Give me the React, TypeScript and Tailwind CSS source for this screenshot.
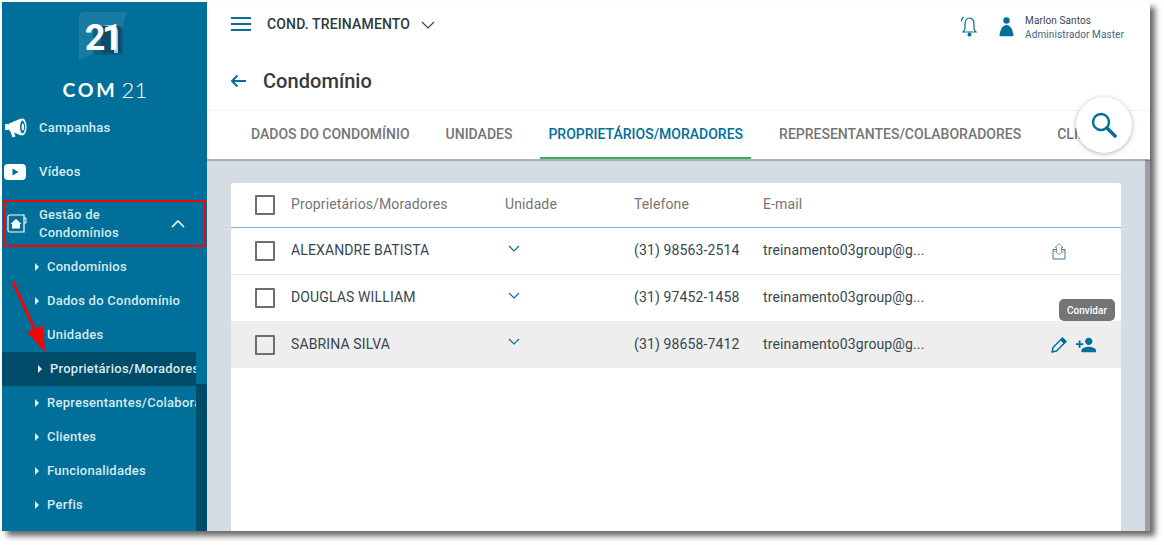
import { MdPersonAdd } from "react-icons/md";

const SUB_MENU = [
  "Condomínios",
  "Dados do Condomínio",
  "Unidades",
  "Proprietários/Moradores",
  "Representantes/Colaboradores",
  "Clientes",
  "Funcionalidades",
  "Perfis",
];

const TABS = [
  "DADOS DO CONDOMÍNIO",
  "UNIDADES",
  "PROPRIETÁRIOS/MORADORES",
  "REPRESENTANTES/COLABORADORES",
  "CLIENTES",
];

const ROWS = [
  { name: "ALEXANDRE BATISTA", phone: "(31) 98563-2514", height: "h-[47px]", textGap: "mb-[2px]" },
  { name: "DOUGLAS WILLIAM", phone: "(31) 97452-1458", height: "h-[46px]", textGap: "mb-[2px]" },
  { name: "SABRINA SILVA", phone: "(31) 98658-7412", height: "h-[47px]", textGap: "mb-0" },
];

const Logo = () => (
  <div className="flex flex-col items-center h-[104px] pt-[10px] shrink-0">
    <div className="relative w-[48px] h-[50px] mr-[4px] flex items-center justify-center">
      <svg width="48" height="50" viewBox="0 0 48 50" className="absolute inset-0">
        <polygon points="0,3 3,0 48,0 38,32 0,48" fill="#2a84a8" opacity="0.6" />
        <rect x="14" y="15" width="30" height="28" rx="4" fill="#0a4f6e" opacity="0.55" />
        <rect x="22" y="14" width="20" height="27" rx="3" fill="#0f4a67" />
        <path d="M24 13c5 0 10 0 12 1 2 1 3 3 3 6v21h-4V18c0-2-1-3-3-3z" fill="#8fcdea" />
      </svg>
      <span className="relative font-['Roboto',sans-serif] font-bold text-[36px] leading-none tracking-[-3.500px] text-white pr-[1px] pt-[2px]">
        21
      </span>
    </div>
    <div className="mt-[17px] flex items-center text-white font-['Lato',sans-serif] leading-none ml-[1px]">
      <span className="text-[19.500px] font-bold tracking-[2.800px]">COM</span>
      <span className="text-[22px] font-light ml-[4px]">21</span>
    </div>
  </div>
);

const MegaphoneIcon = () => (
  <svg width="22" height="20" viewBox="0 0 22 20" fill="#fff">
    <rect x="0" y="6" width="4" height="6" rx="1" />
    <path d="M4 5.500L16 0.500V17.500L4 12.500z" />
    <path d="M5 12.500L7.500 19.500L10.500 18.500L8.500 13.500z" />
    <ellipse cx="17.500" cy="9" rx="4" ry="8.500" />
    <ellipse cx="17.500" cy="9" rx="2.500" ry="6.500" fill="#006f99" />
    <ellipse cx="17.800" cy="9" rx="1.200" ry="3.500" />
  </svg>
);

const VideoIcon = () => (
  <svg width="22" height="16" viewBox="0 0 22 16">
    <rect width="22" height="16" rx="4" fill="#fff" />
    <path d="M8.500 4.500L14.500 8L8.500 11.500z" fill="#006f99" />
  </svg>
);

const HouseIcon = () => (
  <svg width="20" height="19" viewBox="0 0 20 19" fill="none">
    <path d="M15 1H2.500A1.500 1.500 0 0 0 1 2.500v14A1.500 1.500 0 0 0 2.500 18H17V1z" stroke="#fff" strokeWidth="1.200" />
    <path d="M17 4h2v5h-2" stroke="#fff" strokeWidth="1" />
    <path d="M9 5L14.500 10H13V14.500H5V10H3.500z" fill="#fff" />
  </svg>
);

const Sidebar = () => (
  <aside className="relative w-[205px] shrink-0 bg-[#006f99] flex flex-col overflow-hidden text-[#d6eaf2] font-['Roboto',sans-serif] font-medium text-[13px] tracking-[0.25px]">
    <Logo />
    <div className="flex items-center h-[44px] pl-[3px] shrink-0">
      <MegaphoneIcon />
      <span className="ml-[12px]">Campanhas</span>
    </div>
    <div className="flex items-center h-[44px] pl-[2px] shrink-0">
      <VideoIcon />
      <span className="ml-[13px]">Vídeos</span>
    </div>
    <div className="flex items-center justify-between h-[47px] mt-[6px] ml-[1px] mr-[1px] border-[2px] border-[#ff0000] pl-[2px] pr-[19px] shrink-0">
      <div className="flex items-center">
        <HouseIcon />
        <span className="ml-[12px] leading-[18px] w-[90px]">Gestão de Condomínios</span>
      </div>
      <svg width="14" height="8" viewBox="0 0 14 8" fill="none">
        <path d="M1 7 L7 1 L13 7" stroke="#fff" strokeWidth="1.600" />
      </svg>
    </div>
    <ul className="mt-[3px] w-[194px]">
      {SUB_MENU.map((item, index) => {
        const active = index === 3;
        return (
          <li
            key={item}
            className={`h-[34px] flex items-center whitespace-nowrap overflow-hidden ${
              active ? "bg-[#004b68] pl-[36px]" : "pl-[33px]"
            }`}
          >
            <span className="w-0 h-0 border-y-[4px] border-y-transparent border-l-[4px] border-l-[#e6f1f5] shrink-0" />
            <span className="ml-[8px]">{item}</span>
          </li>
        );
      })}
    </ul>
    <div className="absolute right-0 top-[382px] bottom-0 w-[11px] bg-[#004b68]" />
  </aside>
);

const TopBar = () => (
  <header className="bg-white h-[46px] flex items-center justify-between pl-[24px] pr-[26px] shrink-0 font-['Roboto',sans-serif]">
    <div className="flex items-center pb-[2px]">
      <svg width="20" height="14" viewBox="0 0 20 14" fill="#006f99">
        <rect width="20" height="2" />
        <rect y="6" width="20" height="2" />
        <rect y="12" width="20" height="2" />
      </svg>
      <span className="ml-[16px] text-[14px] font-medium text-[#2c3a42] tracking-[0.15px]">COND. TREINAMENTO</span>
      <svg width="14" height="8" viewBox="0 0 14 8" fill="none" className="ml-[11px] mt-[2px]">
        <path d="M1 1 L7 7 L13 1" stroke="#37474f" strokeWidth="1.200" />
      </svg>
    </div>
    <div className="flex items-center mt-[3px]">
      <svg width="17" height="21" viewBox="1 0 17 21" fill="none" stroke="#006f99" strokeWidth="1.200">
        <path d="M9.500 2c-3 0-4.500 3-4.500 6.500v4c0 1.500-1 2.500-2 3.500h13c-1-1-2-2-2-3.500v-4C14 5 12.500 2 9.500 2z" />
        <circle cx="9.500" cy="18.500" r="1.400" fill="#006f99" />
        <path d="M3.500 1C2.500 2 1.500 3.500 1 5.500" />
      </svg>
      <svg width="15" height="20" viewBox="0 0 15 20" fill="#006f99" className="ml-[21px]">
        <circle cx="7.500" cy="3.500" r="3.200" />
        <path d="M7.500 8c3.500 0 6 3.500 7 10 .1.800-.4 1.200-1 1.200h-12c-.6 0-1.100-.4-1-1.200C1.500 11.500 4 8 7.500 8z" />
      </svg>
      <div className="ml-[11px] mt-[2px] text-[10px] leading-[14px] tracking-[0.1px]">
        <div className="text-[#37474f]">Marlon Santos</div>
        <div className="text-[#406a80]">Administrador Master</div>
      </div>
    </div>
  </header>
);

const Tabs = () => (
  <nav className="relative bg-white h-[50px] shrink-0 border-t border-[#f1f1f1] border-b border-b-[#a9b3b9] shadow-[0_1px_1px_rgba(0,0,0,0.2)] flex pl-[36px] gap-[20px] overflow-hidden font-['Roboto',sans-serif] font-medium text-[14px] text-[#757575] whitespace-nowrap">
    {TABS.map((tab, index) => (
      <div
        key={tab}
        className={`px-[8px] h-full flex items-center ${
          index === 2 ? "text-[#006f99] border-b-[2px] border-[#3cab52]" : "pb-[2px]"
        }`}
      >
        {tab}
      </div>
    ))}
  </nav>
);

const Checkbox = () => (
  <span className="w-[20px] h-[20px] rounded-[1px] border-[2px] border-[#6e6e6e] shrink-0" />
);

const MailUpIcon = () => (
  <svg width="14" height="17" viewBox="0 0 14 17" fill="none" stroke="#2f7ea3" strokeWidth="1" className="ml-[1px]">
    <path d="M4 6.500H1v9.500h12V6.500h-3" />
    <path d="M1 7l6 4.500L13 7" stroke="#b8906a" />
    <path d="M4.500 9V4.500h-1.500L7 .8l4 3.700H9.500V9" stroke="#7d95a3" />
  </svg>
);

const PencilIcon = () => (
  <svg width="16" height="16" viewBox="0 0 16 16" fill="none">
    <path d="M1 15l1-4.500L11.500 1 15 4.500 5.500 14z" stroke="#006f99" strokeWidth="1.500" strokeLinejoin="round" />
    <path d="M10 2.500L13.500 6" stroke="#006f99" strokeWidth="2" />
    <path d="M11.500 1L15 4.500 13.500 6 10 2.500z" fill="#006f99" />
  </svg>
);

type RowItemProps = { name: string; phone: string; height: string; textGap: string; index: number };

const RowItem = ({ name, phone, height, textGap, index }: RowItemProps) => (
  <div
    className={`flex items-center ${height} text-[14px] tracking-[0.13px] text-[#37474f] ${
      index === 2 ? "bg-[#eeeeee]" : index === 0 ? "border-b border-[#e6e6e6]" : ""
    }`}
  >
    <div className="w-[60px] pl-[24px] flex">
      <Checkbox />
    </div>
    <div className={`w-[214px] ${textGap}`}>{name}</div>
    <div className="w-[129px] pl-[3px]">
      <svg width="12" height="7" viewBox="0 0 12 7" fill="none" className="mb-[6px]">
        <path d="M1 1l5 5 5-5" stroke="#006f99" strokeWidth="1.100" />
      </svg>
    </div>
    <div className={`w-[129px] ${textGap}`}>{phone}</div>
    <div className={`w-[288px] ${textGap}`}>treinamento03group@g...</div>
    <div className="flex items-center">
      {index === 0 && <MailUpIcon />}
      {index === 2 && (
        <>
          <PencilIcon />
          <MdPersonAdd className="ml-[8px] w-[22px] h-[22px] text-[#006f99]" />
        </>
      )}
    </div>
  </div>
);

const Table = () => (
  <section className="bg-white rounded-t-[3px] ml-[24px] mr-[24px] mt-[23px] flex-1 font-['Roboto',sans-serif]">
    <div className="flex items-center h-[45px] border-b border-[#7fb5d0] text-[14px] tracking-[0.13px] text-[#757575]">
      <div className="w-[60px] pl-[24px] flex">
        <Checkbox />
      </div>
      <div className="w-[214px] mb-[2px]">Proprietários/Moradores</div>
      <div className="w-[129px] mb-[2px]">Unidade</div>
      <div className="w-[129px] mb-[2px]">Telefone</div>
      <div className="mb-[2px]">E-mail</div>
    </div>
    {ROWS.map((row, index) => (
      <RowItem
        key={row.name}
        name={row.name}
        phone={row.phone}
        height={row.height}
        textGap={row.textGap}
        index={index}
      />
    ))}
  </section>
);

export default function App() {
  return (
    <div className="w-[1164px] h-[545px] bg-white overflow-hidden pl-[2px] pt-[2px]">
      <div className="relative w-[1148px] h-[529px] flex bg-white shadow-[5px_5px_6px_rgba(0,0,0,0.6)]">
        <Sidebar />
        <main className="flex-1 flex flex-col min-w-0">
          <TopBar />
          <div className="bg-white h-[62px] shrink-0 flex items-center pl-[23px] pt-[4px] font-['Roboto',sans-serif]">
            <svg width="16" height="14" viewBox="0 0 16 14" fill="none" stroke="#006f99" strokeWidth="2">
              <path d="M16 7H2M7.500 1.500L2 7l5.500 5.500" />
            </svg>
            <span className="ml-[17px] text-[20px] font-medium text-[#37393b] tracking-[0.05px]">Condomínio</span>
          </div>
          <Tabs />
          <div className="flex-1 flex bg-[#d3dde3] border-r-[5px] border-r-[#9aa0a6] min-h-0">
            <Table />
          </div>
        </main>

        <div className="absolute left-[1074px] top-[95px] w-[56px] h-[56px] rounded-full bg-white shadow-[0_1px_5px_rgba(0,0,0,0.3)] flex items-center justify-center">
          <svg width="26" height="26" viewBox="0 0 26 26" fill="none">
            <circle cx="10" cy="10" r="8" stroke="#006f99" strokeWidth="2.400" />
            <path d="M16 16l8 8" stroke="#006f99" strokeWidth="3.500" strokeLinecap="round" />
          </svg>
        </div>

        <div className="absolute left-[1057px] top-[297px] w-[56px] h-[22px] rounded-[5px] bg-[#757575] flex items-center justify-center font-['Roboto',sans-serif] font-medium text-[10px] text-white">
          Convidar
        </div>

        <svg width="50" height="90" viewBox="0 0 50 90" className="absolute left-0 top-[270px]">
          <path d="M11 10L33 58" stroke="#ff0000" strokeWidth="3" />
          <polygon points="43,80 25,60 41,54" fill="#ff0000" />
        </svg>
      </div>
    </div>
  );
}
